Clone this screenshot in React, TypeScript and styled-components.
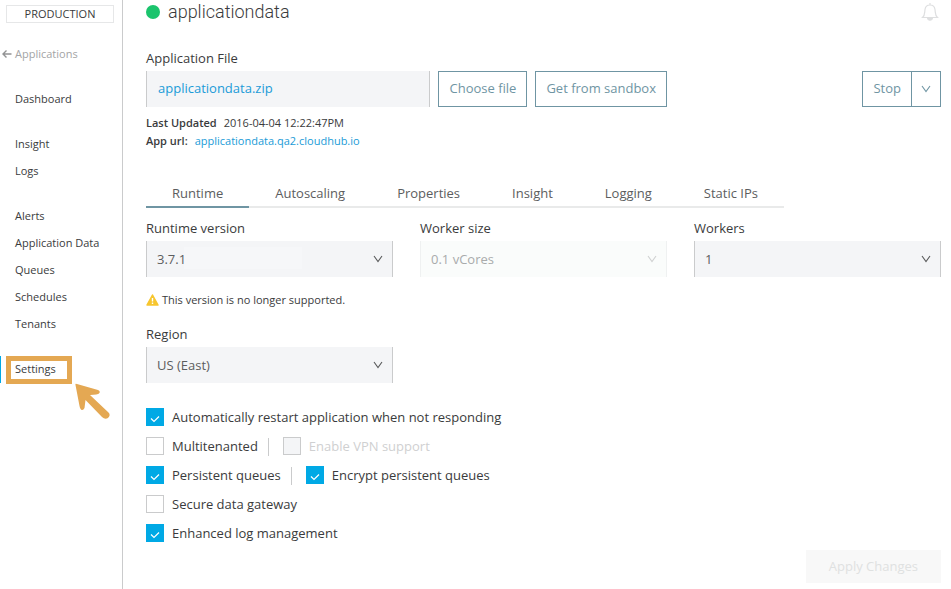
import React from "react";
import styled, { createGlobalStyle, css } from "styled-components";

const color = {
  text: "#3a3b3c",
  muted: "#5c5d5e",
  slate: "#6f95a3",
  link: "#1a9bd7",
  cyan: "#00a9e5",
  field: "#f4f5f7",
  line: "#cacbcc",
  highlight: "#e4a853",
};

const GlobalStyle = createGlobalStyle`
  * { box-sizing: border-box; }
  body {
    margin: 0;
    background: #fff;
    color: ${color.text};
    font: 13px/18px "Open Sans", "Noto Sans", sans-serif;
  }
  button, select, input { font: inherit; color: inherit; margin: 0; }
  a { color: ${color.link}; text-decoration: none; }
`;

const Page = styled.div`
  display: flex;
  min-height: 100vh;
`;

const Sidebar = styled.aside`
  flex: 0 0 123px;
  border-right: 1px solid ${color.line};
  padding-top: 5px;
  font-size: 11px;
`;

const Environment = styled.button`
  display: block;
  width: 108px;
  height: 18px;
  margin-left: 6px;
  padding: 0;
  border: 1px solid #e6e7e8;
  background: #fff;
  line-height: 16px;
`;

const BackLink = styled.a`
  display: flex;
  align-items: center;
  gap: 3px;
  margin: 22px 0 23px;
  padding-left: 2px;
  color: #a3a4a5;
`;

const NavGroup = styled.nav`
  display: flex;
  flex-direction: column;
  margin-bottom: 18px;
`;

const NavLink = styled.a<{ $active?: boolean }>`
  position: relative;
  height: 27px;
  padding-left: 15px;
  line-height: 26px;
  color: ${color.text};
  ${(p) =>
    p.$active &&
    css`
      padding-left: 14px;
      border-left: 1px solid ${color.cyan};
    `}
`;

const Highlight = styled.span`
  position: absolute;
  left: 5px;
  top: 0;
  width: 66px;
  height: 28px;
  border: 5px solid ${color.highlight};
`;

const Pointer = styled.svg`
  position: absolute;
  left: 73px;
  top: 27px;
`;

const Main = styled.main`
  flex: 1;
  display: flex;
  flex-direction: column;
  padding: 0 10px 6px 23px;
`;

const TitleBar = styled.header`
  display: flex;
  align-items: center;
  height: 24px;
  margin-bottom: 25px;
`;

const StatusDot = styled.span`
  width: 14px;
  height: 14px;
  margin-right: 8px;
  border-radius: 50%;
  background: #1bc46d;
`;

const Title = styled.h1`
  flex: 1;
  margin: 0;
  font: 300 18px/24px Roboto, sans-serif;
`;

const BellButton = styled.button`
  display: flex;
  padding: 0 2px 0 0;
  border: 0;
  background: none;
`;

const Columns = styled.div`
  display: grid;
  grid-template-columns: repeat(3, 1fr);
  column-gap: 27px;
`;

const FileArea = styled.section`
  grid-column: span 2;
`;

const Caption = styled.div`
  margin-bottom: 4px;
`;

const FileRow = styled.div`
  display: flex;
  gap: 8px;
  margin-bottom: 7px;
`;

const FileName = styled.a`
  flex: 1;
  height: 36px;
  padding: 0 11px;
  border: solid ${color.line};
  border-width: 0 1px;
  background: ${color.field};
  line-height: 34px;
`;

const OutlineButton = styled.button`
  height: 36px;
  padding: 0 10px 2px;
  border: 1px solid ${color.slate};
  background: #fff;
  color: ${color.slate};
`;

const StopGroup = styled.div`
  display: flex;
  justify-self: end;
  margin-top: 22px;
  align-self: start;
`;

const MoreButton = styled(OutlineButton)`
  display: flex;
  align-items: center;
  padding: 0 8px;
  margin-left: -1px;
`;

const Detail = styled.div`
  font-size: 11px;
  b {
    margin-right: 7px;
    font-weight: 600;
  }
`;

const Tabs = styled.div`
  display: flex;
  align-self: flex-start;
  margin: 32px 0 11px;
`;

const Tab = styled.button<{ $active?: boolean }>`
  height: 26px;
  padding: 0 26px 2px;
  border: 0;
  border-bottom: 2px solid ${(p) => (p.$active ? color.slate : "#e9eaea")};
  background: none;
  color: ${color.muted};
`;

const FieldLabel = styled.label`
  display: flex;
  flex-direction: column;
  gap: 4px;
`;

const SelectBox = styled.span`
  display: grid;
  align-items: center;
  svg {
    grid-area: 1 / 1;
    justify-self: end;
    margin-right: 9px;
    pointer-events: none;
  }
`;

const Select = styled.select<{ $shaded?: boolean }>`
  grid-area: 1 / 1;
  appearance: none;
  width: 100%;
  height: 36px;
  padding: 0 30px 0 10px;
  border: solid ${color.line};
  border-width: 0 1px;
  border-radius: 0;
  background: ${color.field};
  color: ${color.muted};
  ${(p) =>
    p.$shaded &&
    css`
      background: linear-gradient(#f6f7f9, #f6f7f9) 37px 6px / 118px 22px no-repeat ${color.field};
    `}
  &:disabled {
    border-color: #eff1f1;
    background: #fafcfb;
    color: #a9abab;
    opacity: 1;
  }
`;

const Warning = styled.p`
  display: flex;
  align-items: center;
  gap: 3px;
  margin: 14px 0 16px;
  font-size: 11px;
`;

const Options = styled.div`
  display: flex;
  flex-direction: column;
  gap: 11px;
  margin-top: 25px;
`;

const OptionRow = styled.div`
  display: flex;
  align-items: center;
  height: 18px;
`;

const OptionLabel = styled.label<{ $disabled?: boolean }>`
  display: flex;
  align-items: center;
  gap: 8px;
  color: ${(p) => (p.$disabled ? "#cfd0d1" : color.text)};
`;

const Tick = styled.span`
  display: grid;
  svg {
    grid-area: 1 / 1;
    pointer-events: none;
  }
`;

const Checkbox = styled.input`
  grid-area: 1 / 1;
  appearance: none;
  width: 18px;
  height: 18px;
  border: 1px solid ${color.line};
  background: #fff;
  &:checked {
    border-color: ${color.cyan};
    background: ${color.cyan};
  }
  &:disabled {
    background: ${color.field};
  }
  &:not(:checked) + svg {
    visibility: hidden;
  }
`;

const Divider = styled.span`
  width: 1px;
  height: 18px;
  margin: 2px 14px 0 10px;
  background: ${color.line};
`;

const ApplyButton = styled.button`
  align-self: flex-end;
  height: 33px;
  margin-top: auto;
  padding: 0 23px 2px;
  border: 0;
  background: #f8f8f8;
  &:disabled {
    color: #dfe1e1;
  }
`;

const Chevron = ({ stroke }: { stroke: string }) => (
  <svg width="12" height="12" viewBox="0 0 12 12" fill="none" stroke={stroke} strokeWidth="1.1">
    <path d="M2 3L6 8.500L10 3" />
  </svg>
);

const Bell = () => (
  <svg width="18" height="20" viewBox="0 0 18 20" fill="none" stroke="#dedfe0" strokeWidth="1.2">
    <path d="M9 1V3M1.5 15.5C4 13.5 3.5 11.5 4 7.5C4.4 4.5 6 3 9 3C12 3 13.6 4.5 14 7.5C14.5 11.5 14 13.5 16.5 15.5Z" />
    <path d="M6.5 16C7 19 11 19 11.500 16Z" fill="#dedfe0" />
  </svg>
);

interface FieldProps {
  label: string;
  value: string;
  disabled?: boolean;
  shaded?: boolean;
}

const Field = ({ label, value, disabled, shaded }: FieldProps) => (
  <FieldLabel>
    {label}
    <SelectBox>
      <Select disabled={disabled} $shaded={shaded} defaultValue={value}>
        <option>{value}</option>
      </Select>
      <Chevron stroke={disabled ? "#cfd1d1" : "#58595a"} />
    </SelectBox>
  </FieldLabel>
);

interface OptionProps {
  label: string;
  checked?: boolean;
  disabled?: boolean;
}

const Option = ({ label, checked, disabled }: OptionProps) => (
  <OptionLabel $disabled={disabled}>
    <Tick>
      <Checkbox type="checkbox" defaultChecked={checked} disabled={disabled} />
      <svg width="18" height="18" viewBox="0 0 18 18" fill="none" stroke="#fff" strokeWidth="1.2">
        <path d="M5 10.500L8 13.500L13 8.500" />
      </svg>
    </Tick>
    {label}
  </OptionLabel>
);

const navGroups = [
  ["Dashboard"],
  ["Insight", "Logs"],
  ["Alerts", "Application Data", "Queues", "Schedules", "Tenants"],
];

const tabs = ["Runtime", "Autoscaling", "Properties", "Insight", "Logging", "Static IPs"];

export default function App() {
  return (
    <>
      <GlobalStyle />
      <Page>
        <Sidebar>
          <Environment>PRODUCTION</Environment>
          <BackLink href="#applications">
            <svg width="10" height="10" viewBox="0 0 10 10" fill="none" stroke="#929394" strokeWidth="1.4">
              <path d="M9.500 5H1M4.500 1.500L1 5L4.500 8.500" />
            </svg>
            Applications
          </BackLink>
          {navGroups.map((group) => (
            <NavGroup key={group[0]}>
              {group.map((item) => (
                <NavLink key={item} href="#">
                  {item}
                </NavLink>
              ))}
            </NavGroup>
          ))}
          <NavGroup>
            <NavLink href="#settings" $active aria-current="page">
              Settings
              <Highlight />
              <Pointer width="38" height="38" viewBox="0 0 38 38" fill={color.highlight}>
                <path d="M1.500 2Q1 0 3 1L24 7Q27 8.500 25 10.500Q24 11.500 16 12L34.500 29.500Q37 32 34 35Q31 37 28 34L11.500 17L10.500 25Q9 28 7 26.500Q6 26 5.500 23Z" />
              </Pointer>
            </NavLink>
          </NavGroup>
        </Sidebar>

        <Main>
          <TitleBar>
            <StatusDot />
            <Title>applicationdata</Title>
            <BellButton aria-label="Notifications">
              <Bell />
            </BellButton>
          </TitleBar>

          <Columns>
            <FileArea>
              <Caption>Application File</Caption>
              <FileRow>
                <FileName href="#file">applicationdata.zip</FileName>
                <OutlineButton>Choose file</OutlineButton>
                <OutlineButton>Get from sandbox</OutlineButton>
              </FileRow>
              <Detail>
                <b>Last Updated</b>2016-04-04 12:22:47PM
              </Detail>
              <Detail>
                <b>App url:</b>
                <a href="#app">applicationdata.qa2.cloudhub.io</a>
              </Detail>
            </FileArea>
            <StopGroup>
              <OutlineButton>Stop</OutlineButton>
              <MoreButton aria-label="More actions">
                <Chevron stroke={color.slate} />
              </MoreButton>
            </StopGroup>
          </Columns>

          <Tabs role="tablist">
            {tabs.map((tab, i) => (
              <Tab key={tab} role="tab" aria-selected={i === 0} $active={i === 0}>
                {tab}
              </Tab>
            ))}
          </Tabs>

          <Columns>
            <Field label="Runtime version" value="3.7.1" shaded />
            <Field label="Worker size" value="0.1 vCores" disabled />
            <Field label="Workers" value="1" />
          </Columns>
          <Warning>
            <svg width="13" height="12" viewBox="0 0 13 12">
              <path d="M6.500 1L12 11H1Z" fill="#f7c62f" stroke="#f7c62f" strokeWidth="1.500" strokeLinejoin="round" />
              <path d="M6.500 4V7.500M6.500 8.500V10" stroke="#fff" strokeWidth="1.400" />
            </svg>
            This version is no longer supported.
          </Warning>
          <Columns>
            <Field label="Region" value="US (East)" />
          </Columns>

          <Options>
            <OptionRow>
              <Option label="Automatically restart application when not responding" checked />
            </OptionRow>
            <OptionRow>
              <Option label="Multitenanted" />
              <Divider />
              <Option label="Enable VPN support" disabled />
            </OptionRow>
            <OptionRow>
              <Option label="Persistent queues" checked />
              <Divider />
              <Option label="Encrypt persistent queues" checked />
            </OptionRow>
            <OptionRow>
              <Option label="Secure data gateway" />
            </OptionRow>
            <OptionRow>
              <Option label="Enhanced log management" checked />
            </OptionRow>
          </Options>

          <ApplyButton disabled>Apply Changes</ApplyButton>
        </Main>
      </Page>
    </>
  );
}
